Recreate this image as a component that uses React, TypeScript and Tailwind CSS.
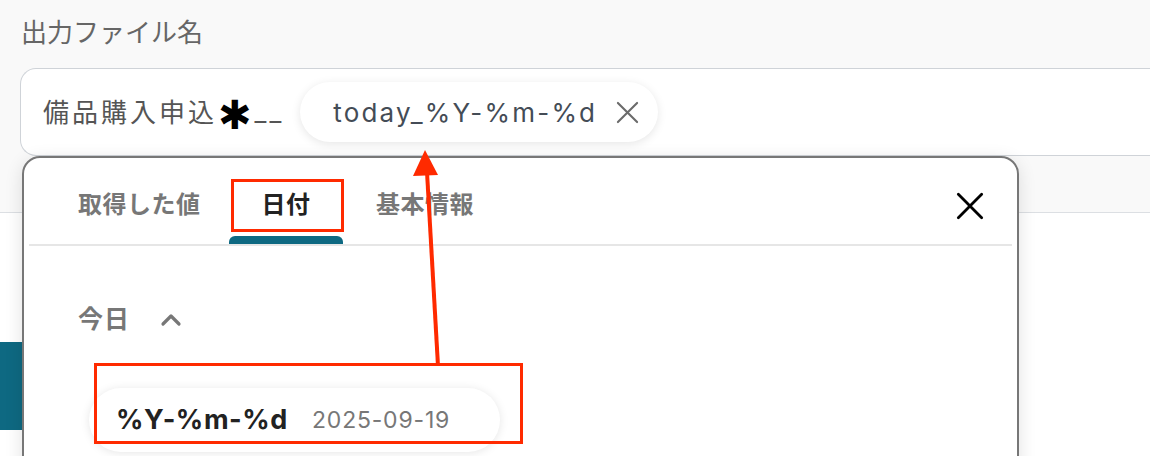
import React from 'react';

const jp = "font-['Inter','Noto_Sans_CJK_JP',sans-serif]";

const XIcon: React.FC<{ size: number; stroke: number; className?: string }> = ({ size, stroke, className }) => (
  <svg width={size} height={size} viewBox="0 0 24 24" fill="none" stroke="currentColor" strokeWidth={stroke} strokeLinecap="round" className={className}>
    <path d="M2 2 L22 22 M22 2 L2 22" />
  </svg>
);

export default function App() {
  return (
    <div className={`relative w-[1150px] h-[456px] overflow-hidden bg-white ${jp}`}>
      {/* field section */}
      <div className="h-[213px] bg-[#f9f9f9] border-b border-[#dcdfe3] pl-[20px]">
        <div className="pt-[14px] h-[68px] text-[26px] leading-[38px] text-[#666] pl-[1px]">出力ファイル名</div>
        <div className="h-[88px] bg-white border border-r-0 border-[#cfd3d8] rounded-l-[16px] flex items-center pl-[22px]">
          <span className="text-[26px] text-[#555] tracking-[3px]">備品購入申込</span>
          <span className="text-[40px] leading-none text-black font-['DejaVu_Sans',sans-serif] font-bold ml-[1px] mt-[6px]">✱</span>
          <span className="text-[26px] text-[#555] ml-[3px] mb-[2px] tracking-[3px]">__</span>
          <div className="ml-[16px] h-[60px] w-[358px] rounded-full bg-white shadow-[0_2px_10px_rgba(0,0,0,0.10)] flex items-center pl-[33px]">
            <span className="text-[26px] text-[#444c56] tracking-[2.2px]">today_%Y-%m-%d</span>
            <XIcon size={23} stroke={2.2} className="ml-[19px] text-[#6b6b6b]" />
          </div>
        </div>
      </div>

      {/* teal block behind the popup */}
      <div className="absolute left-0 top-[342px] w-[22px] h-[88px] bg-[#0e6982]" />

      {/* popup */}
      <div className="absolute left-[22px] top-[156px] w-[997px] h-[320px] bg-white border-2 border-[#777] rounded-t-[18px] shadow-[0_4px_18px_rgba(0,0,0,0.12)] px-[5px]">
        <div className="relative h-[88px] border-b-2 border-[#e6e6e6] flex">
          <div className="w-[200px] pl-[49px] pt-[30px] text-[24px] leading-[34px] font-bold text-[#777] tracking-[0.5px]">取得した値</div>
          <div className="w-[114px] flex flex-col items-center justify-between pt-[30px]">
            <div className="text-[24px] leading-[34px] font-bold text-[#222] tracking-[0.5px]">日付</div>
            <div className="w-[114px] h-[8px] bg-[#0e6982] rounded-t-[6px]" />
          </div>
          <div className="pl-[33px] pt-[30px] text-[24px] leading-[34px] font-bold text-[#777] tracking-[0.5px]">基本情報</div>
          <XIcon size={28} stroke={2.4} className="absolute right-[28px] top-[34px] text-black" />
        </div>
        <div className="pl-[49px] pt-[56px] flex items-center text-[25px] leading-[34px] text-[#777] font-semibold">
          <span className="tracking-[1px]">今日</span>
          <svg width="22" height="16" viewBox="0 0 22 16" fill="none" stroke="currentColor" strokeWidth="3.2" strokeLinecap="round" strokeLinejoin="round" className="ml-[30px]">
            <path d="M3 13 L11 5 L19 13" />
          </svg>
        </div>
        <div className="ml-[60px] mt-[52px] h-[64px] w-[411px] rounded-full bg-white shadow-[0_1px_10px_rgba(0,0,0,0.10)] flex items-center pl-[27px]">
          <span className="text-[27px] font-bold text-[#222] tracking-[0.6px]">%Y-%m-%d</span>
          <span className="ml-[24px] text-[23px] text-[#777] tracking-[0.8px]">2025-09-19</span>
        </div>
      </div>

      {/* annotations */}
      <div className="absolute left-[231px] top-[179px] w-[113px] h-[53px] border-[3px] border-[#ff2a00]" />
      <div className="absolute left-[94px] top-[363px] w-[429px] h-[81px] border-[3px] border-[#ff2a00]" />
      <svg className="absolute left-0 top-0" width="1150" height="456" viewBox="0 0 1150 456">
        <line x1="438" y1="366" x2="427" y2="172" stroke="#ff2a00" strokeWidth="4" />
        <polygon points="425,150 413,176 438,175" fill="#ff2a00" />
      </svg>
    </div>
  );
}
